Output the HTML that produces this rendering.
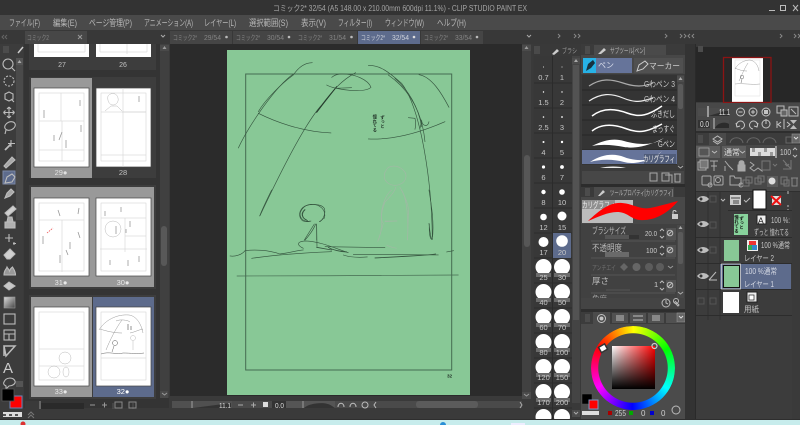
<!DOCTYPE html>
<html lang="ja"><head><meta charset="utf-8"><title>CLIP STUDIO PAINT EX</title>
<style>
html,body{margin:0;padding:0;background:#3a3a3a;width:800px;height:425px;overflow:hidden}
svg{position:absolute;left:0;top:0}
text{font-family:"Liberation Sans","Noto Sans CJK JP",sans-serif;fill:#b4b4b4;font-size:8px}
.m{font-size:9px;fill:#b8b8b8}
.t{font-size:7px;fill:#858585}
.l{font-size:8px;fill:#c0c0c0;text-anchor:middle}
.n{font-size:7.500px;fill:#c8c8c8;text-anchor:middle}
.i{fill:none;stroke:#bcbcbc;stroke-width:1.100}
.s{fill:none;stroke:#34543e;stroke-linecap:round}
.w{fill:#fff}
.g{fill:none;stroke:#cdcdcd;stroke-width:.5}
.h{fill:none;stroke:#a8a8a8;stroke-width:.4}
.k{fill:none;stroke:#999;stroke-width:.8}
.b{fill:#4a4a4a}
#wheel{position:absolute;left:591px;top:326px;width:84px;height:84px;border-radius:50%;background:conic-gradient(from 301deg,#f00,#ff0,#0f0,#0ff,#00f,#f0f,#f00);-webkit-mask:radial-gradient(circle,transparent 34.500px,#000 35px);mask:radial-gradient(circle,transparent 34.500px,#000 35px)}
#sq{position:absolute;left:612px;top:346px;width:43px;height:43px;background:linear-gradient(to bottom,transparent,#000),linear-gradient(to right,#fff,#f00)}
</style></head><body>
<svg width="800" height="425" viewBox="0 0 800 425" xmlns="http://www.w3.org/2000/svg">
<rect width="800" height="425" fill="#3a3a3a"/>
<rect width="800" height="15" fill="#333"/>
<rect y="15" width="800" height="15" fill="#4a4a4a"/>
<rect y="30" width="800" height="14" fill="#383838"/>
<text x="273" y="11" style="font-size:8px;fill:#a5a5a5" textLength="254" lengthAdjust="spacingAndGlyphs">コミック2* 32/54 (A5 148.00 x 210.00mm 600dpi 11.1%)  - CLIP STUDIO PAINT EX</text>
<g fill="none" stroke="#bbb" stroke-width="1"><path d="M769 10.500h6"/><rect x="780.500" y="5.500" width="5" height="5"/><path d="M793 5l5 6M798 5l-5 6"/></g>
<text class="m" x="9" y="26" textLength="31" lengthAdjust="spacingAndGlyphs">ファイル(F)</text>
<text class="m" x="53" y="26" textLength="24" lengthAdjust="spacingAndGlyphs">編集(E)</text>
<text class="m" x="89" y="26" textLength="43" lengthAdjust="spacingAndGlyphs">ページ管理(P)</text>
<text class="m" x="144" y="26" textLength="49" lengthAdjust="spacingAndGlyphs">アニメーション(A)</text>
<text class="m" x="204" y="26" textLength="32" lengthAdjust="spacingAndGlyphs">レイヤー(L)</text>
<text class="m" x="249" y="26" textLength="39" lengthAdjust="spacingAndGlyphs">選択範囲(S)</text>
<text class="m" x="301" y="26" textLength="25" lengthAdjust="spacingAndGlyphs">表示(V)</text>
<text class="m" x="338" y="26" textLength="34" lengthAdjust="spacingAndGlyphs">フィルター(I)</text>
<text class="m" x="385" y="26" textLength="39" lengthAdjust="spacingAndGlyphs">ウィンドウ(W)</text>
<text class="m" x="437" y="26" textLength="29" lengthAdjust="spacingAndGlyphs">ヘルプ(H)</text>

<!-- left toolbar -->
<rect x="0" y="44" width="23" height="376" fill="#3c3c3c"/>
<rect x="16" y="58" width="7" height="162" fill="#4a4a4a"/>
<rect x="16" y="58" width="7" height="7" fill="#555"/>
<path d="M19.500 60l-2 3h4z" fill="#aaa"/>
<rect x="3" y="46" width="6" height="7" fill="#4c4c4c"/>
<path d="M18 53l5-6" stroke="#ccc" stroke-width="1.500"/>
<path d="M4 35l-2 2 2 2M7 35l-2 2 2 2" stroke="#666" fill="none"/>
<rect x="3" y="171" width="12" height="13" fill="#5d6b8c" stroke="#7b88a6"/>
<g class="i">
<circle cx="8" cy="64" r="5"/><path d="M12 68l3 3"/>
<circle cx="9" cy="81" r="5" stroke-dasharray="2 1.400"/>
<path d="M5 94l4-2 4 2v5l-4 2-4-2zM11 99l3 3"/>
<path d="M9 107v11M3.500 112.500h11M9 107l-2 2M9 107l2 2M9 118l-2-2M9 118l2-2M3.500 112.500l2-2M3.500 112.500l2 2M14.500 112.500l-2-2M14.500 112.500l-2 2"/>
<ellipse cx="10" cy="126" rx="5.500" ry="4" transform="rotate(-25 10 126)"/><path d="M6 130l-1 4"/>
<path d="M5 150l6-6" stroke-width="1.800"/><path d="M11 140v7M8 143.500h7"/>
<path d="M4 166l8-9 3 3-9 8z" fill="#a8a8a8"/>
<path d="M5 183l2-6 5-3 3 3-3 5z"/>
<path d="M5 198l2-5 4-4 3 3-4 4z" fill="#a8a8a8"/>
<path d="M5 213l8-7 3 3-8 7z" fill="#d0d0d0"/>
<path d="M5 222h10v6H5zM7 222l1-5h4l1 5" fill="#b0b0b0"/>
<path d="M9 234v8M5 238h8M14 242v3M13 243.500h3"/>
<path d="M4 255l6-6 5 5-5 5H7z" fill="#d0d0d0"/>
<path d="M4 275c0-5 2-5 3-8 1 2 2 2 2.500 4 1-3 2-3 3-4 1 2 3 4 3 8z" fill="#999"/>
<path d="M4 286l5-4 6 4-6 4z" fill="#c8c8c8"/>
</g>
<defs><linearGradient id="gr" x1="0" y1="0" x2="1" y2="1"><stop offset="0" stop-color="#ddd"/><stop offset="1" stop-color="#444"/></linearGradient></defs>
<rect x="4" y="297" width="11" height="11" fill="url(#gr)" stroke="#999" stroke-width=".6"/>
<g class="i">
<rect x="4" y="314" width="11" height="10"/>
<rect x="4" y="330" width="11" height="10"/><path d="M4 334h11M9 334v6"/>
<path d="M4 346h11l-9 10zM4 346v10" stroke-width="1.500"/>
<path d="M4 382c2-5 9-5 11-1 1 3-3 5-6 5l-3 3v-3c-2-1-3-2-2-4z"/>
</g>
<text x="3" y="373" style="font-size:15px;fill:#ccc">A</text>
<rect x="16" y="381" width="7" height="6" fill="#555"/>
<rect x="10" y="396" width="12" height="12" fill="#f00" stroke="#6d83b8" stroke-width="1"/>
<rect x="2" y="389" width="12" height="12" fill="#000" stroke="#555" stroke-width=".8"/>
<rect x="3" y="412" width="19" height="5" fill="#ddd"/>
<path d="M3 414h3v2H3zM9 414h3v2H9zM15 414h3v2h-3z" fill="#555"/>

<!-- tab row -->
<rect x="25" y="31" width="62" height="13" fill="#474747"/>
<text class="t" x="27" y="40" textLength="22" lengthAdjust="spacingAndGlyphs">コミック2</text>
<path d="M78 35l4 4M82 35l-4 4" stroke="#999"/>
<path d="M161 35l2 2 2-2" stroke="#aaa" fill="none"/>
<g><rect x="170" y="31" width="62" height="13" fill="#454545"/><text class="t" x="173" y="40" textLength="24" lengthAdjust="spacingAndGlyphs">コミック2*</text><text class="t" x="204" y="40" textLength="17" lengthAdjust="spacingAndGlyphs">29/54</text><circle cx="226.500" cy="37" r="1.300" fill="#bbb"/></g>
<g><rect x="233" y="31" width="62" height="13" fill="#454545"/><text class="t" x="236" y="40" textLength="24" lengthAdjust="spacingAndGlyphs">コミック2*</text><text class="t" x="267" y="40" textLength="17" lengthAdjust="spacingAndGlyphs">30/54</text><circle cx="289" cy="37" r="1.300" fill="#bbb"/></g>
<g><rect x="295" y="31" width="62" height="13" fill="#454545"/><text class="t" x="298" y="40" textLength="24" lengthAdjust="spacingAndGlyphs">コミック2*</text><text class="t" x="329" y="40" textLength="17" lengthAdjust="spacingAndGlyphs">31/54</text><circle cx="351.500" cy="37" r="1.300" fill="#bbb"/></g>
<g><rect x="358" y="31" width="62" height="13" fill="#5d6b8c"/><text class="t" x="361" y="40" style="fill:#d0d4dd" textLength="24" lengthAdjust="spacingAndGlyphs">コミック2*</text><text class="t" x="392" y="40" style="fill:#d0d4dd" textLength="17" lengthAdjust="spacingAndGlyphs">32/54</text><circle cx="414" cy="37" r="1.300" fill="#ddd"/></g>
<g><rect x="421" y="31" width="62" height="13" fill="#454545"/><text class="t" x="424" y="40" textLength="24" lengthAdjust="spacingAndGlyphs">コミック2*</text><text class="t" x="455" y="40" textLength="17" lengthAdjust="spacingAndGlyphs">33/54</text><circle cx="477" cy="37" r="1.300" fill="#bbb"/></g>
<path d="M527 35l2 2 2-2" stroke="#aaa" fill="none"/>
<path d="M558 34l2 2-2 2M574 34l2 2-2 2M578 34l2 2-2 2M665 34l2 2-2 2M680 34l2 2-2 2M684 34l2 2-2 2M694 34l-2 2 2 2M690 34l-2 2 2 2M780 34l2 2-2 2M794 34l2 2-2 2M798 34l2 2-2 2" stroke="#888" fill="none"/>

<!-- page manager -->
<rect x="24" y="44" width="145" height="364" fill="#343434"/>
<rect x="29" y="44" width="127" height="26" fill="#3d3d3d"/>
<rect x="34" y="44" width="55" height="13" fill="#fff"/><path d="M38 44v8h47V44" class="g"/>
<rect x="96" y="44" width="55" height="13" fill="#fff"/><path d="M100 44v8h47V44M127 44v10" class="g"/>
<text class="l" x="62" y="67" style="font-size:7px">27</text><text class="l" x="123" y="67" style="font-size:7px">26</text>

<rect x="29" y="77" width="127" height="101" fill="#3d3d3d"/>
<rect x="31" y="78" width="61" height="100" fill="#999"/>
<rect x="34" y="88" width="55" height="79" class="w" stroke="#444" stroke-width=".7"/>
<rect x="96" y="88" width="55" height="79" class="w" stroke="#444" stroke-width=".7"/>
<rect x="39" y="93" width="45" height="68" class="g"/><path d="M39 121h45M61 93v28M62 121v40M39 150h45" class="g"/>
<rect x="101" y="93" width="45" height="68" class="g"/><path d="M101 112h45M123 88v79M101 155h45M122 112h24" class="g"/>
<path d="M108 96c3-4 9-3 10 2 1 4-2 7-5 7-4 0-6-5-5-9zM105 111l6-5 6 0 5 5" class="h"/>
<path d="M80 100v6M44 110v8M81 125v7M62 132l-3 8M54 135v6M66 140v8M139 96v6" class="k"/>
<text class="n" x="61" y="175" style="fill:#e0e0e0">29●</text><text class="l" x="123" y="175" style="font-size:7.500px">28</text>

<rect x="29" y="185" width="127" height="104" fill="#3d3d3d"/>
<rect x="31" y="187" width="123" height="100" fill="#999"/>
<rect x="34" y="198" width="55" height="78" class="w" stroke="#444" stroke-width=".7"/>
<rect x="96" y="198" width="55" height="78" class="w" stroke="#444" stroke-width=".7"/>
<rect x="39" y="203" width="45" height="68" class="g"/><path d="M39 220h45M62 220v52" class="g"/>
<path d="M58 210l2 6M79 208l-1 6M43 236v8M60 255v8M70 242v7M78 232l2 6M66 250l2 5" class="k"/>
<path d="M47 233l6-5" stroke="#e55" stroke-width=".8" stroke-dasharray="1.500 1"/>
<rect x="101" y="203" width="45" height="68" class="g"/><path d="M101 218h45M125 218v34M125 236h21M100 249h47" class="g"/>
<path d="M121 207v5M105 211v5M130 221v6M126 229v4M116 226v8M110 260v5M128 260v6M139 256v6" class="k"/>
<circle cx="113" cy="229" r="8" class="h"/>
<text class="n" x="61" y="285" style="fill:#e8e8e8">31●</text><text class="n" x="123" y="285" style="fill:#e8e8e8">30●</text>

<rect x="29" y="295" width="127" height="104" fill="#3d3d3d"/>
<rect x="31" y="297" width="61" height="100" fill="#999"/>
<rect x="93" y="297" width="61" height="100" fill="#5d6b8c"/>
<rect x="34" y="307" width="55" height="79" class="w" stroke="#444" stroke-width=".7"/>
<rect x="96" y="307" width="55" height="79" class="w" stroke="#444" stroke-width=".7"/>
<rect x="39" y="312" width="45" height="68" class="g"/><path d="M39 349h45M39 366h45" class="g"/>
<circle cx="65" cy="358" r="6" class="h"/><circle cx="54" cy="372" r="6" class="h"/><ellipse cx="66" cy="372" rx="3" ry="5" class="h"/>
<rect x="101" y="312" width="45" height="68" class="g"/><path d="M101 358h45" class="g"/>
<path d="M99 330c6-10 18-16 30-15 7 1 12 8 14 18M100 329c6 2 14 4 22 4M106 350c4-10 10-22 16-30M116 321c4-2 12-1 14 1M130 333c5-1 8-3 13-4" fill="none" stroke="#999" stroke-width=".5"/>
<circle cx="115" cy="343" r="2.500" fill="none" stroke="#555" stroke-width=".5"/>
<path d="M101 354c8-3 16 1 22-1 8 0 14 1 21 0M114 346l-2 6" fill="none" stroke="#666" stroke-width=".5"/>
<path d="M131 326v4M128 324v6" stroke="#666" stroke-width=".7"/><circle cx="133" cy="338" r="2.500" class="h"/><path d="M133 341v9" class="h"/>
<text class="n" x="61" y="394" style="fill:#e8e8e8">33●</text><text class="n" x="123" y="394" style="fill:#fff">32●</text>

<rect x="160" y="44" width="9" height="354" fill="#404040"/>
<rect x="160" y="45" width="9" height="6" class="b"/><path d="M164.500 46l-2 3h4z" fill="#999"/>
<rect x="161" y="226" width="6" height="40" rx="3" fill="#585858"/>
<rect x="160" y="391" width="8" height="7" class="b"/><path d="M162 393l2.500 2 2.500-2" stroke="#999" fill="none"/>
<rect x="25" y="401" width="14" height="8" fill="#3a3a3a"/><rect x="39" y="401" width="2" height="8" fill="#666"/><rect x="41" y="403" width="43" height="6" fill="#2a2a2a"/>
<path d="M90 405h5M102 405h5M104.500 402.500v5" stroke="#999" fill="none"/><path d="M113 403v6M133 403v6" stroke="#555"/>
<rect x="115" y="402" width="7" height="6" fill="none" stroke="#888"/><rect x="129" y="402" width="7" height="6" fill="none" stroke="#888"/>
<path d="M28 415l3-3 3 3M28 418l3-3 3 3" stroke="#777" fill="none"/>

<!-- canvas -->
<rect x="170" y="44" width="352" height="352" fill="#2b2b2b"/>
<rect x="227" y="50" width="243" height="345" fill="#88c896"/>
<rect x="245.700" y="74" width="206" height="296" fill="none" stroke="#456b51" stroke-width="1"/>
<g transform="translate(225 50) scale(.3333)">
<g class="s" stroke-width="1.900">
<path d="M40 294C70 230 150 110 205 72"/>
<path d="M100 185C120 150 170 100 205 75 225 45 245 38 262 38"/>
<path d="M100 190C150 215 230 245 318 249"/>
<path d="M105 497C160 380 240 220 290 165 320 125 350 90 392 68"/>
<path d="M275 187C295 160 315 135 335 110" stroke-width="3" stroke="#243a2c"/>
<path d="M305 105C330 120 420 130 438 112 430 90 390 70 345 72 335 73 325 78 320 82"/>
<path d="M330 115L380 113"/>
<path d="M430 46C470 45 500 75 530 100 590 180 620 400 622 560"/>
<path d="M490 75C540 110 590 170 600 275"/>
<path d="M510 85C550 120 580 170 590 230"/>
<path d="M582 74C620 80 650 130 672 172"/>
<path d="M430 267C500 270 580 250 660 215"/>
<path d="M550 203L570 205C575 225 570 235 570 238M590 210C590 230 610 232 612 215M585 235L590 215"/>
<path d="M298 505C305 480 285 462 258 463 232 465 220 490 228 503 235 515 250 515 255 513M285 515L296 505M240 480C228 490 232 505 245 510"/>
<path d="M272 522C265 540 250 560 240 570"/>
<path d="M275 522L275 570"/>
<path d="M612 520C614 540 618 570 622 568"/>
</g>
<g fill="none" stroke="#a3b8a6" stroke-width="1.800" stroke-linecap="round">
<path d="M490 352C515 340 545 360 543 380 540 405 510 412 490 400 475 390 472 372 490 352z"/>
<path d="M512 412C510 425 495 440 480 456 470 480 465 510 475 520 470 540 465 555 460 570M525 412C535 430 550 460 550 480 550 510 548 540 548 570M480 515L515 513"/>
</g>
<text x="474" y="196" style="font-size:13px;fill:#1f2f25;writing-mode:vertical-rl;font-weight:bold">ずっと</text>
<text x="451" y="194" style="font-size:13px;fill:#1f2f25;writing-mode:vertical-rl;font-weight:bold">憧れてる</text>
</g>
<g transform="translate(225 190) scale(.3333)">
<g class="s" stroke-width="1.900">
<path d="M104 78C115 50 130 20 140 0"/>
<path d="M15 198C30 200 50 195 60 182 90 178 130 180 165 192 200 188 210 182 235 180"/>
<path d="M80 205C150 195 240 188 320 185"/>
<path d="M235 175C215 165 215 155 240 153 290 155 330 175 370 188"/>
<path d="M300 170L480 173"/>
<path d="M275 172L320 180M310 172C320 180 350 185 365 186" stroke-width="2.600"/>
<path d="M355 195C375 202 400 203 427 201"/>
<path d="M385 193L640 195"/>
<path d="M450 204C510 200 590 198 632 192" stroke-width="2.600"/>
<path d="M665 186L686 182"/>
<path d="M238 150L268 102M275 103L276 170"/>
<path d="M298 55C290 42 260 40 240 48 220 60 220 80 232 92 245 97 255 95 258 93M283 95C295 90 303 70 298 55M240 58C225 70 230 85 248 92"/>
<path d="M612 0C620 50 628 100 622 148 615 150 612 130 613 102"/>
<path d="M36 258C250 258 500 256 700 255" stroke="#456b51" stroke-width="2.200"/>
</g>
<path d="M500 0C480 15 465 60 470 95 470 120 465 140 458 155M530 0C548 30 550 90 548 150M480 93L517 93M485 165C495 172 505 172 515 175" fill="none" stroke="#a3b8a6" stroke-width="1.800"/>
<text x="666" y="563" style="font-size:14px;fill:#1f2f25;font-weight:bold">32</text>
</g>

<!-- canvas scrolls & bottom -->
<rect x="522" y="44" width="9" height="352" fill="#414141"/>
<rect x="522" y="45" width="9" height="6" fill="#4b4b4b"/><path d="M526.500 46l-2 3h4z" fill="#999"/>
<rect x="524" y="155" width="6" height="92" rx="3" fill="#575757"/>
<rect x="522" y="392" width="9" height="7" fill="#4b4b4b"/><path d="M524 394l2.500 2 2.500-2" stroke="#999" fill="none"/>
<rect x="172" y="401" width="350" height="7" class="b"/>
<rect x="172" y="401" width="60" height="7" fill="#505050"/><path d="M193 408l38-5v5z" fill="#333"/><rect x="191" y="401" width="2" height="7" fill="#777"/>
<text x="219" y="408" style="font-size:7.500px;fill:#ddd" textLength="12" lengthAdjust="spacingAndGlyphs">11.1</text>
<path d="M238 405h5M251 405h5M253.500 402.500v5" stroke="#aaa" fill="none"/>
<rect x="263" y="402" width="5" height="5" fill="#ddd"/>
<rect x="272" y="401" width="30" height="7" fill="#555"/><rect x="272" y="401" width="14" height="7" fill="#333"/>
<text x="275" y="408" style="font-size:7.500px;fill:#ddd" textLength="9" lengthAdjust="spacingAndGlyphs">0.0</text>
<rect x="302" y="401" width="2" height="7" fill="#777"/><rect x="304" y="401" width="31" height="7" fill="#555"/><path d="M304 408c5-5 22-7 28-2l3 2z" fill="#333"/>
<path d="M338 407c0-5 6-5 6 0M350 407c0-5 6-5 6 0" fill="none" stroke="#bbb"/><circle cx="365" cy="405" r="3" fill="none" stroke="#bbb"/>
<path d="M376 402l-2 3 2 3" stroke="#bbb" fill="none"/>
<rect x="416" y="401" width="62" height="7" rx="3" fill="#5b5b5b"/>
<path d="M520 402l2 3-2 3" stroke="#aaa" fill="none"/>

<!-- brush size -->
<rect x="533" y="44" width="48" height="376" fill="#393939"/>
<rect x="534" y="46" width="6" height="8" fill="#4a4a4a"/>
<path d="M552 54l5-5 2 2-5 4z" fill="#ccc"/>
<text x="562" y="53" style="font-size:7px;fill:#999" textLength="15" lengthAdjust="spacingAndGlyphs">ブラシ</text>
<rect x="534" y="56" width="38" height="364" fill="#383838"/>
<path d="M534 83h38M534 108h38M534 133h38M534 158h38M534 183h38M534 208h38M534 233h38M534 258h38M534 283h38M534 308h38M534 333h38M534 358h38M534 383h38M534 408h38M552.500 56v364" stroke="#2b2b2b"/>
<rect x="553" y="233" width="18" height="25" fill="#5d6b8c"/>
<rect x="572" y="56" width="8" height="347" fill="#444"/>
<rect x="573" y="65" width="6" height="255" fill="#535353"/>
<rect x="572" y="58" width="8" height="6" fill="#4c4c4c"/><path d="M576 59l-2 3h4z" fill="#aaa"/>
<rect x="572" y="410" width="8" height="7" fill="#4c4c4c"/><path d="M574 412l2 2 2-2" stroke="#aaa" fill="none"/>
<g fill="#fff">
<circle cx="543.500" cy="67" r=".5"/><circle cx="562" cy="67" r=".5"/>
<circle cx="543.500" cy="92" r=".7"/><circle cx="562" cy="92" r=".7"/>
<circle cx="543.500" cy="117" r=".8"/><circle cx="562" cy="117" r=".9"/>
<circle cx="543.500" cy="142" r="1"/><circle cx="562" cy="142" r="1.200"/>
<circle cx="543.500" cy="167" r="1.600"/><circle cx="562" cy="167" r="1.900"/>
<circle cx="543.500" cy="192" r="2.200"/><circle cx="562" cy="192" r="2.800"/>
<circle cx="543.500" cy="217" r="3.300"/><circle cx="562" cy="216" r="4.500"/>
<circle cx="543.500" cy="242" r="5"/><circle cx="562" cy="241" r="5.800"/>
<circle cx="543.500" cy="267" r="8"/><circle cx="562" cy="267" r="8"/>
<circle cx="543.500" cy="292" r="8"/><circle cx="562" cy="292" r="8"/>
<circle cx="543.500" cy="317" r="8"/><circle cx="562" cy="317" r="8"/>
<circle cx="543.500" cy="342" r="8"/><circle cx="562" cy="342" r="8"/>
<circle cx="543.500" cy="367" r="8"/><circle cx="562" cy="367" r="8"/>
<circle cx="543.500" cy="392" r="8"/><circle cx="562" cy="392" r="8"/>
<circle cx="543.500" cy="417" r="8"/><circle cx="562" cy="417" r="8"/>
</g>
<g fill="#6c6c6c">
<path d="M536 273h15v4h-15zM554 273h16v4h-16zM536 298h15v4h-15zM554 298h16v4h-16zM536 323h15v4h-15zM554 323h16v4h-16zM536 348h15v4h-15zM554 348h16v4h-16zM536 373h15v4h-15zM554 373h16v4h-16zM536 398h15v4h-15zM554 398h16v4h-16z"/>
</g>
<text class="n" x="543.500" y="80">0.7</text><text class="n" x="562" y="80">1</text>
<text class="n" x="543.500" y="105">1.5</text><text class="n" x="562" y="105">2</text>
<text class="n" x="543.500" y="130">2.5</text><text class="n" x="562" y="130">3</text>
<text class="n" x="543.500" y="155">4</text><text class="n" x="562" y="155">5</text>
<text class="n" x="543.500" y="180">6</text><text class="n" x="562" y="180">7</text>
<text class="n" x="543.500" y="205">8</text><text class="n" x="562" y="205">10</text>
<text class="n" x="543.500" y="230">12</text><text class="n" x="562" y="230">15</text>
<text class="n" x="543.500" y="255">17</text><text class="n" x="562" y="255">20</text>
<text class="n" x="543.500" y="280">25</text><text class="n" x="562" y="280">30</text>
<text class="n" x="543.500" y="305">40</text><text class="n" x="562" y="305">50</text>
<text class="n" x="543.500" y="330">60</text><text class="n" x="562" y="330">70</text>
<text class="n" x="543.500" y="355">80</text><text class="n" x="562" y="355">100</text>
<text class="n" x="543.500" y="380">120</text><text class="n" x="562" y="380">150</text>
<text class="n" x="543.500" y="405">170</text><text class="n" x="562" y="405">200</text>

<!-- sub tool -->
<rect x="581" y="44" width="104" height="140" fill="#3b3b3b"/>
<rect x="585" y="46" width="5" height="8" fill="#4c4c4c"/>
<rect x="594" y="45" width="72" height="10" class="b"/>
<path d="M598 54l6-6 2 2-5 4z" fill="#ccc"/>
<text x="610" y="53" style="font-size:7px;fill:#b5b5b5" textLength="35" lengthAdjust="spacingAndGlyphs">サブツール[ペン]</text>
<rect x="581" y="55" width="104" height="19" fill="#474747"/>
<rect x="583" y="58" width="49" height="15" fill="#66749a"/>
<rect x="583" y="58" width="13" height="15" fill="#27b2e6"/>
<path d="M586 71l2-7 5-4 2 3-4 5z" fill="#17323f"/>
<text x="598" y="68" style="font-size:8px;fill:#d8dcea">ペン</text>
<rect x="634" y="58" width="49" height="15" fill="#505050"/>
<path d="M637 71l2-6 6-4 3 3-5 5z" fill="none" stroke="#ccc"/>
<text x="649" y="69" style="font-size:8.500px;fill:#ccc" textLength="31" lengthAdjust="spacingAndGlyphs">マーカー</text>
<rect x="582" y="75" width="95" height="90" fill="#343434"/>
<path d="M582 90h95M582 105h95M582 120h95M582 135h95M582 150h95" stroke="#262626"/>
<rect x="582" y="150" width="95" height="14" fill="#66749a"/>
<path d="M589 86c12-8 22-7 34-3s20 4 30 0" fill="none" stroke="#aaa" stroke-width="1.200"/>
<path d="M589 101c12-8 22-8 34-3s18 4 30 0" fill="none" stroke="#eee" stroke-width="1.200"/>
<path d="M592 116c10-8 22-8 35-3s22 2 35-7" fill="none" stroke="#fff" stroke-width="1.500"/>
<path d="M592 131c10-8 22-7 35-2s22 2 35-5" fill="none" stroke="#fff" stroke-width="1.500"/>
<path d="M592 146c12-6 22-8 32-5s28 6 40-3c-15 8-30 11-40 9s-22-3-32-1z" fill="#fff"/>
<path d="M590 162c12-8 24-9 34-5s28 6 38-6c-10 10-28 14-38 11s-24-3-34 0z" fill="#fff"/>
<path d="M600 165c8-2 18-2 26 0z" fill="#fff" opacity=".9" transform="translate(0 3)"/>
<rect x="644" y="154" width="32" height="10" fill="#4b5670" opacity=".8"/>
<text x="644" y="87" style="font-size:8.500px;fill:#c8c8c8" textLength="31" lengthAdjust="spacingAndGlyphs">Gわペン 3</text>
<text x="644" y="102" style="font-size:8.500px;fill:#c8c8c8" textLength="31" lengthAdjust="spacingAndGlyphs">Gわペン 4</text>
<text x="651" y="117" style="font-size:8.500px;fill:#d8d8d8" textLength="24" lengthAdjust="spacingAndGlyphs">ふきだし</text>
<text x="652" y="132" style="font-size:8.500px;fill:#d8d8d8" textLength="23" lengthAdjust="spacingAndGlyphs">まっすぐ</text>
<text x="658" y="147" style="font-size:8.500px;fill:#d8d8d8" textLength="17" lengthAdjust="spacingAndGlyphs">Gペン</text>
<text x="643" y="162" style="font-size:8.500px;fill:#eee" textLength="32" lengthAdjust="spacingAndGlyphs">カリグラフィ</text>
<rect x="677" y="75" width="7" height="90" fill="#444"/><rect x="678" y="84" width="5" height="25" fill="#5a5a5a" rx="2"/>
<rect x="677" y="76" width="7" height="6" fill="#4d4d4d"/><path d="M680.500 77l-2 3h4z" fill="#aaa"/>
<path d="M678 166l2.500 2 2.500-2" stroke="#aaa" fill="none"/>
<rect x="582" y="171" width="102" height="13" fill="#474747"/>
<g fill="none" stroke="#aaa"><rect x="650" y="173" width="7" height="8"/><rect x="662" y="173" width="7" height="8"/><path d="M665 175h7v8"/><path d="M674 174h7M675 174v8h5v-8"/></g>

<!-- tool property -->
<rect x="581" y="184" width="104" height="3" fill="#2c2c2c"/>
<rect x="585" y="188" width="5" height="8" fill="#4c4c4c"/>
<rect x="594" y="187" width="80" height="10" class="b"/>
<path d="M598 196l5-6 2 2-5 4z" fill="#ccc"/>
<text x="610" y="195" style="font-size:7px;fill:#b5b5b5" textLength="63" lengthAdjust="spacingAndGlyphs">ツールプロパティ[カリグラフィ]</text>
<rect x="581" y="197" width="104" height="27" fill="#484848"/>
<rect x="582" y="200" width="51" height="23" fill="#bcbcbc"/>
<rect x="582" y="200" width="33" height="9" fill="#8f8f8f"/>
<text x="582" y="208" style="font-size:8.500px;fill:#f0f0f0" textLength="33" lengthAdjust="spacingAndGlyphs">カリグラフィ</text>
<path d="M588 221C600 210 610 202 622 203 634 204 640 210 650 208 660 206 670 203 678 201 668 213 655 221 640 220 630 219 628 212 617 212 608 212 598 217 588 221z" fill="#f00"/>
<rect x="672" y="214" width="6" height="5" fill="#ccc"/><path d="M673 214v-2c0-2 3-2 3 0" stroke="#ccc" fill="none"/>
<rect x="581" y="224" width="104" height="86" fill="#414141"/>
<text x="592" y="234" style="font-size:9px;fill:#bbb" textLength="34" lengthAdjust="spacingAndGlyphs">ブラシサイズ</text>
<rect x="605" y="235" width="24" height="4" fill="#555"/><rect x="629" y="235" width="10" height="4" fill="#333"/>
<text x="645" y="236" style="font-size:7.500px;fill:#ccc" textLength="12" lengthAdjust="spacingAndGlyphs">20.0</text>
<path d="M660 231l2-2 2 2M660 236l2 2 2-2" stroke="#bbb" fill="none"/>
<rect x="666" y="228" width="10" height="12" fill="#525252"/><circle cx="670" cy="233" r="2.800" stroke="#bbb" fill="none"/><path d="M668 235l4-4" stroke="#bbb"/>
<path d="M591 241h84" stroke="#555"/>
<text x="592" y="251" style="font-size:9px;fill:#bbb" textLength="30" lengthAdjust="spacingAndGlyphs">不透明度</text>
<rect x="605" y="252" width="24" height="5" fill="#6a6a6a"/>
<text x="646" y="253" style="font-size:7.500px;fill:#ccc" textLength="11" lengthAdjust="spacingAndGlyphs">100</text>
<path d="M660 248l2-2 2 2M660 253l2 2 2-2" stroke="#bbb" fill="none"/>
<rect x="666" y="245" width="10" height="12" fill="#525252"/><circle cx="670" cy="250" r="2.800" stroke="#bbb" fill="none"/><path d="M668 252l4-4" stroke="#bbb"/>
<path d="M591 258h84" stroke="#555"/>
<text x="592" y="270" style="font-size:7px;fill:#6f6f6f" textLength="24" lengthAdjust="spacingAndGlyphs">アンチエイ</text>
<path d="M624 263l4 4-4 4-4-4z" fill="#666"/><circle cx="636.500" cy="267" r="4" fill="#666"/><circle cx="649" cy="267" r="4" fill="#5c5c5c"/><circle cx="660" cy="267" r="4" fill="#5c5c5c"/>
<path d="M668 266l2.500 2 2.500-2" stroke="#999" fill="none"/>
<path d="M591 275h84" stroke="#555"/>
<text x="592" y="284" style="font-size:8.500px;fill:#bbb">厚さ</text>
<path d="M606 290h24" stroke="#555"/>
<text x="654" y="287" style="font-size:7.500px;fill:#ccc">1</text>
<path d="M660 283l2-2 2 2M660 288l2 2 2-2" stroke="#bbb" fill="none"/>
<rect x="666" y="280" width="10" height="12" fill="#525252"/><circle cx="670" cy="285" r="2.800" stroke="#bbb" fill="none"/><path d="M668 287l4-4" stroke="#bbb"/>
<path d="M591 293h84" stroke="#555"/>
<text x="592" y="301" style="font-size:7.500px;fill:#999">角度</text>
<rect x="677" y="225" width="7" height="73" fill="#484848"/><rect x="678" y="232" width="5" height="32" fill="#5a5a5a" rx="2"/>
<path d="M680.500 226l-2 3h4z" fill="#aaa"/><path d="M678 292l2.500 2 2.500-2" stroke="#aaa" fill="none"/>

<!-- colour wheel panel -->
<rect x="581" y="309" width="104" height="111" fill="#4b4b4b"/>
<rect x="581" y="298" width="104" height="11" fill="#444"/>
<circle cx="666" cy="303" r="4" fill="none" stroke="#bbb"/><path d="M666 300v3l2 1" stroke="#bbb" fill="none"/>
<path d="M675 301l4 4-1 1-4-4" stroke="#bbb" fill="none"/><circle cx="676" cy="301" r="2.500" fill="none" stroke="#bbb"/>
<rect x="581" y="309" width="104" height="3" fill="#2e2e2e"/>
<rect x="581" y="312" width="104" height="12" fill="#3c3c3c"/>
<rect x="585" y="314" width="5" height="8" fill="#4c4c4c"/>
<rect x="593" y="312" width="17" height="12" fill="#4b4b4b"/>
<circle cx="601.500" cy="318.500" r="4" fill="none" stroke="#c4c4c4"/><circle cx="601.500" cy="318.500" r="2" fill="#c4c4c4"/>
<rect x="612" y="313" width="16" height="10" fill="#515151"/><rect x="616" y="315" width="8" height="6" fill="#888"/>
<rect x="630" y="313" width="16" height="10" fill="#515151"/><path d="M633 316h10M633 320h10" stroke="#888" stroke-width="2"/>
<rect x="648" y="313" width="16" height="10" fill="#515151"/><rect x="652" y="315" width="8" height="6" fill="#888"/>
<rect x="666" y="313" width="11" height="10" fill="#515151"/>
<rect x="677" y="313" width="8" height="9" fill="#666" stroke="#999" stroke-width=".5"/><path d="M679 316l2 2 2-2" stroke="#ddd" fill="none"/>

<!-- navigator -->
<rect x="685" y="44" width="115" height="376" fill="#3d3d3d"/>
<rect x="696" y="44" width="104" height="4" fill="#383838"/>
<rect x="696" y="47" width="104" height="55" fill="#272727"/>
<rect x="685" y="44" width="11" height="376" fill="#333"/>
<rect x="695" y="44" width="1" height="376" fill="#2a2a2a"/>
<rect x="698" y="46" width="5" height="6" fill="#4c4c4c"/>
<rect x="732" y="58" width="31" height="44" fill="#fff"/>
<rect x="723.500" y="57.500" width="47.500" height="45" fill="none" stroke="#8c1414" stroke-width="1.300"/>
<rect x="735" y="60" width="25" height="36" fill="none" stroke="#ddd" stroke-width=".5"/>
<path d="M735 69c3-6 10-9 15-9 5 1 8 5 9 11M735 68c4 2 8 3 12 3M739 81c3-6 5-12 9-18M735 84c8-1 16 1 25 0" fill="none" stroke="#888" stroke-width=".4"/>
<circle cx="742" cy="77" r="1.800" fill="none" stroke="#666" stroke-width=".5"/><path d="M742 79l-1 4" stroke="#666" stroke-width=".5"/>
<rect x="696" y="103" width="104" height="28" fill="#484848"/>
<rect x="698" y="108" width="31" height="8" fill="#4c4c4c"/><path d="M708 116l21-6v6z" fill="#303030"/><rect x="707" y="106" width="2" height="11" fill="#999"/>
<text x="719" y="115" style="font-size:8px;fill:#e0e0e0" textLength="11" lengthAdjust="spacingAndGlyphs">11.1</text>
<g fill="none" stroke="#c4c4c4"><circle cx="740.500" cy="112" r="4"/><path d="M738.500 112h4"/><circle cx="753" cy="112" r="4"/><path d="M751 112h4M753 110v4"/><circle cx="766" cy="112" r="4"/></g>
<rect x="764" y="110" width="4" height="4" fill="#c4c4c4"/>
<rect x="777" y="106" width="7" height="7" fill="none" stroke="#bbb"/><rect x="781" y="110" width="6" height="6" fill="#666" stroke="#bbb"/>
<rect x="789" y="107" width="9" height="9" fill="none" stroke="#bbb"/><path d="M791 109l5 5" stroke="#bbb"/>
<rect x="698" y="120" width="31" height="8" fill="#4c4c4c"/><rect x="698" y="120" width="12" height="8" fill="#333"/><path d="M715 128c2-5 10-7 14-4v4z" fill="#2c2c2c"/><rect x="713" y="118" width="2" height="11" fill="#888"/>
<text x="700" y="127" style="font-size:8px;fill:#e0e0e0" textLength="9" lengthAdjust="spacingAndGlyphs">0.0</text>
<g fill="none" stroke="#c4c4c4"><path d="M737 127a4 4 0 1 1 4 2M736 123l1 4 3-1M757 127a4 4 0 1 0-4 2M758 123l-1 4-3-1"/><circle cx="766" cy="124" r="4"/><path d="M766 119v5"/><path d="M777 121v7M781 122l-3 2.500 3 2.500M787 122l3 2.500-3 2.500M784 119v10"/></g>
<path d="M790 120h7l-3.500 4zM790 129h7l-3.500-4z" fill="#bbb"/>
<rect x="696" y="131" width="104" height="2" fill="#2e2e2e"/>
<rect x="696" y="133" width="104" height="12" fill="#3c3c3c"/>
<rect x="698" y="135" width="5" height="8" fill="#4c4c4c"/>
<rect x="709" y="133" width="17" height="12" class="b"/>
<path d="M713 139l4.500-3 4.500 3-4.500 3zM713 141l4.500 3 4.500-3" fill="none" stroke="#bbb"/>
<g fill="none" stroke="#666"><path d="M730 143c1-7 12-7 13 0M747 143c1-7 12-7 13 0M763 143c1-7 12-7 13 0"/><rect x="786" y="137" width="6" height="6"/></g>
<rect x="792" y="134" width="8" height="9" fill="#666" stroke="#999" stroke-width=".5"/><path d="M794 137l2 2 2-2" stroke="#ddd" fill="none"/>
<rect x="696" y="145" width="104" height="47" fill="#484848"/>
<rect x="696" y="146" width="24" height="12" fill="#5d5d5d"/><rect x="699" y="148" width="10" height="8" fill="#555" stroke="#aaa" stroke-width=".7"/>
<path d="M712 151l2.500 2 2.500-2" stroke="#bbb" fill="none"/>
<rect x="722" y="146" width="24" height="12" fill="#5d5d5d"/>
<text x="724" y="155" style="font-size:8px;fill:#ddd">通常</text><path d="M740 151l2.500 2 2.500-2" stroke="#bbb" fill="none"/>
<rect x="750" y="148" width="27" height="8" fill="#ddd"/>
<path d="M752 148h3v4h-3zM758 152h3v4h-3zM764 148h3v4h-3zM770 152h3v4h-3z" fill="#999"/>
<rect x="775" y="146" width="2" height="12" fill="#999"/>
<text x="780" y="155" style="font-size:8px;fill:#ccc" textLength="11" lengthAdjust="spacingAndGlyphs">100</text>
<path d="M793 150l2-2 2 2M793 155l2 2 2-2" stroke="#bbb" fill="none"/>
<g fill="none" stroke="#aaa">
<rect x="698" y="162" width="8" height="8"/><rect x="700" y="160" width="8" height="8" fill="#777"/>
<path d="M710 161h8M714 161v10M711 166h6"/>
<path d="M725 161l4 5 4 4M725 166v5"/>
<path d="M738 165h7v6h-7zM739 165v-2c0-3 5-3 5 0v2" fill="#aaa"/>
<path d="M750 162l4 3-4 3 4 3 4-3 4 3v-9"/>
<path d="M762 161h8v9h-8z" stroke="#777"/><path d="M773 164l2 2 2-2M785 164l2 2 2-2" stroke="#777"/>
<path d="M783 160l8 9M791 160v9h-8" stroke="#777"/>
<rect x="702" y="176" width="9" height="9" rx="1"/><circle cx="710" cy="185" r="2"/>
<rect x="714" y="176" width="9" height="9" rx="1"/><circle cx="718" cy="180" r="2.500"/>
<path d="M730 176h4l1 2h6v7h-11z"/><circle cx="741" cy="185" r="2"/>
<path d="M743 180h6v6h-6zM746 177h6v6h-6zM755 178h6v6h-6zM758 176h6v6h-6z" stroke="#777"/>
</g>
<rect x="767" y="176" width="11" height="11" fill="#5b5b5b"/><circle cx="772" cy="181" r="3.500" fill="#ddd"/>
<path d="M781 177h6v7h-6zM784 180h5v6h-5z" fill="none" stroke="#777"/>
<path d="M791 178h7M792 178v8h5v-8" fill="none" stroke="#888"/>
<rect x="696" y="191" width="104" height="1" fill="#2f2f2f"/>

<!-- layers -->
<rect x="696" y="192" width="96" height="228" fill="#3c3c3c"/>
<rect x="792" y="192" width="8" height="228" fill="#3a3a3a"/>
<path d="M708 192v128M720 192v128" stroke="#2f2f2f"/>
<path d="M696 237.500h96M696 263.500h96M696 289.500h96M696 315.500h96M728 210.500h64" stroke="#2c2c2c"/>
<rect x="720" y="264" width="71" height="25" fill="#5d6b8c"/>
<g fill="#bdbdbd"><path d="M697 199c3-4 9-4 12 0-3 4-9 4-12 0z"/><path d="M697 224c3-4 9-4 12 0-3 4-9 4-12 0z"/><path d="M697 250c3-4 9-4 12 0-3 4-9 4-12 0z"/><path d="M697 276c3-4 9-4 12 0-3 4-9 4-12 0z"/></g>
<g fill="#333"><circle cx="701" cy="199" r="1.500"/><circle cx="701" cy="224" r="1.500"/><circle cx="701" cy="250" r="1.500"/><circle cx="701" cy="276" r="1.500"/></g>
<g fill="none" stroke="#555"><rect x="710" y="196" width="6" height="6"/><rect x="710" y="222" width="6" height="6"/><rect x="710" y="247" width="6" height="6"/><rect x="698" y="298" width="6" height="6"/><rect x="710" y="298" width="6" height="6"/></g>
<path d="M709 280l7-8M709 280h8" stroke="#bbb" fill="none"/>
<path d="M721 199l2 2 2-2" stroke="#bbb" fill="none"/>
<rect x="730" y="195" width="11" height="10" fill="#ccc"/><path d="M731 198h9M733 201h6M733 203h6" stroke="#444"/>
<path d="M744 200l2 2 4-4" stroke="#bbb" fill="none"/>
<rect x="753" y="190" width="13" height="19" fill="#fff" stroke="#111"/>
<path d="M772 196h9v9h-9z" fill="#ddd"/><path d="M771 196l10 9M781 196l-9 9" stroke="#e11" stroke-width="2"/>
<path d="M788 191v3M788 205v2M788 209v1" stroke="#bbb"/>
<rect x="734" y="214" width="14" height="21" fill="#88d39c"/>
<text x="742" y="216" style="font-size:4.500px;fill:#111;font-weight:bold;writing-mode:vertical-rl">ずっと</text>
<text x="737" y="215" style="font-size:4.500px;fill:#111;font-weight:bold;writing-mode:vertical-rl">憧れてる</text>
<rect x="757" y="215" width="9" height="9" fill="#eee" stroke="#222"/><text x="758" y="223.500" style="font-size:8.500px;fill:#111">A</text>
<text x="771" y="223" style="font-size:8px;fill:#c5c5c5" textLength="19" lengthAdjust="spacingAndGlyphs">100 %:</text>
<text x="754" y="235" style="font-size:8px;fill:#c5c5c5" textLength="35" lengthAdjust="spacingAndGlyphs">ずっと 憧れてる</text>
<rect x="724" y="240" width="15" height="21" fill="#88c896"/>
<rect x="747" y="240" width="11" height="11" fill="#eee"/>
<rect x="749" y="241" width="7" height="4" fill="#e33"/><rect x="748" y="245" width="4" height="5" fill="#3a5"/><rect x="752" y="245" width="5" height="5" fill="#38c"/>
<text x="761" y="248" style="font-size:8px;fill:#c5c5c5" textLength="29" lengthAdjust="spacingAndGlyphs">100 %通常</text>
<text x="744" y="261" style="font-size:8px;fill:#c5c5c5" textLength="30" lengthAdjust="spacingAndGlyphs">レイヤー 2</text>
<rect x="723.500" y="265.500" width="16" height="22" fill="#88c896" stroke="#111" stroke-width="1"/><rect x="721.500" y="264" width="19" height="25" fill="none" stroke="#ccc" stroke-width=".8"/>
<text x="745" y="274" style="font-size:8px;fill:#d4d8e3" textLength="32" lengthAdjust="spacingAndGlyphs">100 %通常</text>
<text x="744" y="287" style="font-size:8px;fill:#d4d8e3" textLength="30" lengthAdjust="spacingAndGlyphs">レイヤー 1</text>
<rect x="723" y="292" width="16" height="21" fill="#fff"/>
<rect x="747" y="292" width="10" height="10" fill="#eee" stroke="#222"/><rect x="749" y="295" width="5" height="5" fill="#fff" stroke="#222" stroke-width=".7"/>
<text x="744" y="312" style="font-size:8px;fill:#c5c5c5" textLength="15" lengthAdjust="spacingAndGlyphs">用紙</text>

<rect y="420" width="800" height="5" fill="#c7ecec"/>
<rect y="419" width="800" height="1" fill="#2e2e2e"/>
<circle cx="23" cy="424" r="2.500" fill="#d33"/>
<circle cx="443" cy="425" r="3" fill="#2a8fd6"/>
<rect x="511" y="423" width="14" height="2" fill="#eef"/>
</svg>
<div id="wheel"></div>
<div id="sq"></div>
<svg width="800" height="425" viewBox="0 0 800 425" style="pointer-events:none">
<rect x="600" y="347" width="7" height="6" fill="#fff" stroke="#333" stroke-width="1.500" transform="rotate(-30 600 350)"/>
<circle cx="654.500" cy="346" r="2.500" fill="none" stroke="#ccc" stroke-width="1.200"/>
<rect x="582" y="394" width="10" height="10" fill="#000" stroke="#555" stroke-width=".5"/>
<rect x="589" y="400" width="9" height="9" fill="#f00" stroke="#7f94c4" stroke-width="1"/>
<rect x="582" y="411" width="17" height="4" fill="#ddd"/>
<rect x="608" y="411" width="4" height="4" fill="#a00"/><text x="615" y="416" style="font-size:8px;fill:#ccc" textLength="11" lengthAdjust="spacingAndGlyphs">255</text>
<rect x="629" y="411" width="4" height="4" fill="#0a0"/><text x="641" y="416" style="font-size:8px;fill:#ccc">0</text>
<rect x="650" y="411" width="4" height="4" fill="#00c"/><text x="661" y="416" style="font-size:8px;fill:#ccc">0</text>
<circle cx="676" cy="410" r="4" fill="none" stroke="#bbb"/>
</svg>
</body></html>
